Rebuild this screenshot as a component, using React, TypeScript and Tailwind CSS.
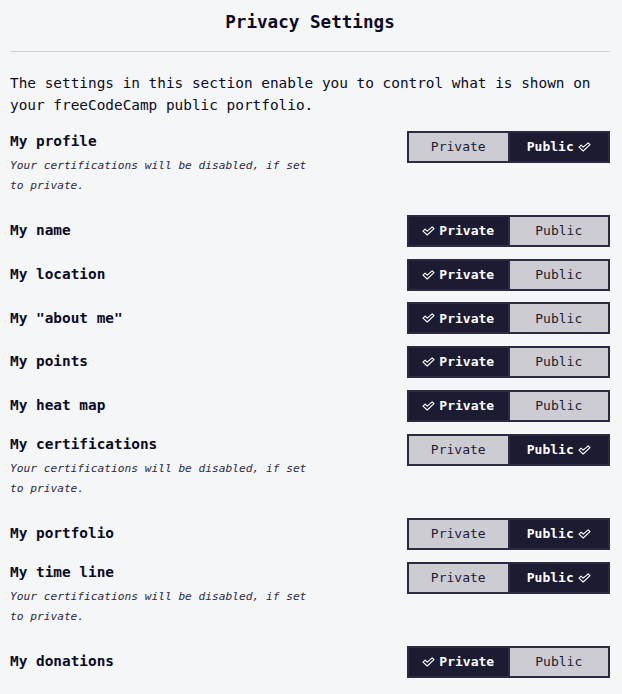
import React, { useState } from 'react';

type Setting = {
  key: string;
  label: string;
  isPublic: boolean;
  note?: boolean;
};

const initialSettings: Setting[] = [
  { key: 'profile', label: 'My profile', isPublic: true, note: true },
  { key: 'name', label: 'My name', isPublic: false },
  { key: 'location', label: 'My location', isPublic: false },
  { key: 'about', label: 'My "about me"', isPublic: false },
  { key: 'points', label: 'My points', isPublic: false },
  { key: 'heatmap', label: 'My heat map', isPublic: false },
  { key: 'certs', label: 'My certifications', isPublic: true, note: true },
  { key: 'portfolio', label: 'My portfolio', isPublic: true },
  { key: 'timeline', label: 'My time line', isPublic: true, note: true },
  { key: 'donations', label: 'My donations', isPublic: false },
];

const Check = () => (
  <svg width="13" height="10" viewBox="0 0 13 10" fill="none" className="shrink-0">
    <path
      d="M1 5.2 L3.1 3.1 L5.2 5.2 L10.2 0.8 L12 2.6 L5.2 9 Z"
      stroke="#ffffff"
      strokeWidth="1.1"
      strokeLinejoin="round"
    />
  </svg>
);

const Toggle: React.FC<{ isPublic: boolean; onChange: (v: boolean) => void }> = ({
  isPublic,
  onChange,
}) => {
  const on = 'bg-[#1b1b32] text-white font-bold';
  const off = 'bg-[#cdccd3] text-[#1b1b32]';
  return (
    <div className="flex w-[203px] h-[32px] shrink-0 border-2 border-[#2a2a40] bg-[#2a2a40] gap-[2px]">
      <button
        type="button"
        onClick={() => onChange(false)}
        className={`flex-1 flex items-center justify-center gap-[4px] text-[13px] ${!isPublic ? on : off}`}
      >
        {!isPublic && <Check />}
        Private
      </button>
      <button
        type="button"
        onClick={() => onChange(true)}
        className={`flex-1 flex items-center justify-center gap-[4px] text-[13px] ${isPublic ? on : off}`}
      >
        Public
        {isPublic && <Check />}
      </button>
    </div>
  );
};

export default function App() {
  const [settings, setSettings] = useState(initialSettings);

  const update = (key: string, v: boolean) =>
    setSettings(s => s.map(it => (it.key === key ? { ...it, isPublic: v } : it)));

  return (
    <div className="min-h-screen bg-[#f5f6f7] text-[#0a0a23] pl-[10px] pr-[12px] pt-[10px] font-['DejaVu_Sans_Mono',monospace] text-[14.4px] leading-[1.5]">
      <h2 className="text-center text-[17.6px] font-bold leading-[24px]">Privacy Settings</h2>
      <hr className="mt-[17px] border-0 h-px bg-[#d0d0d5]" />
      <p className="mt-[21px]">
        The settings in this section enable you to control what is shown on your freeCodeCamp
        public portfolio.
      </p>

      <div className="mt-[14.6px] flex flex-col gap-[11.8px]">
        {settings.map(s =>
          s.note ? (
            <div key={s.key} className="flex justify-between items-start h-[72.2px]">
              <div className="w-[310px]">
                <div className="font-bold">{s.label}</div>
                <p className="mt-[3.5px] italic text-[11.2px] leading-[20px] text-[#2a2a40]">
                  Your certifications will be disabled, if set to private.
                </p>
              </div>
              <Toggle isPublic={s.isPublic} onChange={v => update(s.key, v)} />
            </div>
          ) : (
            <div key={s.key} className="flex justify-between items-center">
              <div className="font-bold">{s.label}</div>
              <Toggle isPublic={s.isPublic} onChange={v => update(s.key, v)} />
            </div>
          )
        )}
      </div>
    </div>
  );
}
